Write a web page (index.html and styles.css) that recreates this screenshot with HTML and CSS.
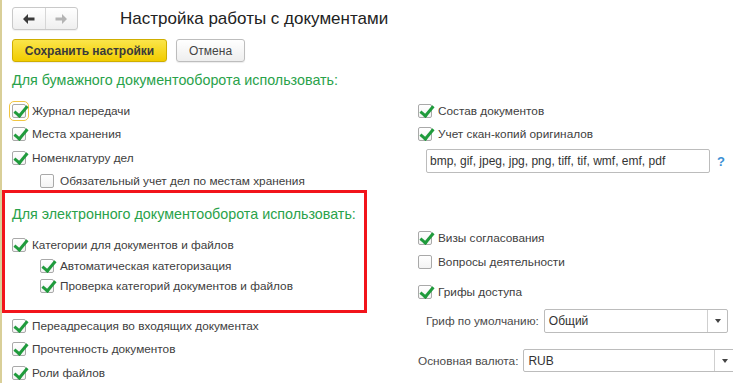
FILE: index.html
```html
<!DOCTYPE html>
<html lang="ru">
<head>
<meta charset="utf-8">
<title>Настройка работы с документами</title>
<link rel="stylesheet" href="styles.css">
</head>
<body>
<div class="page">
  <div class="header">
    <div class="nav">
      <button class="nav-btn" type="button" aria-label="Назад">
        <svg width="12" height="10" viewBox="0 0 12 10"><polygon points="0,5 5,0 5,3.5 11.5,3.5 11.5,6.5 5,6.5 5,10" fill="#3a3a3a"/></svg>
      </button>
      <button class="nav-btn" type="button" aria-label="Вперёд">
        <svg width="12" height="10" viewBox="0 0 12 10"><polygon points="12,5 7,0 7,3.5 0.5,3.5 0.5,6.5 7,6.5 7,10" fill="#b4b4b4"/></svg>
      </button>
    </div>
    <h1 class="title">Настройка работы с документами</h1>
  </div>

  <div class="actions">
    <button class="btn btn-primary" type="button">Сохранить настройки</button>
    <button class="btn" type="button">Отмена</button>
  </div>

  <h2 class="group-title group-title-paper">Для бумажного документооборота использовать:</h2>
  <div class="cols">
    <div class="col">
      <label class="check focused"><span class="box on"></span>Журнал передачи</label>
      <label class="check"><span class="box on"></span>Места хранения</label>
      <label class="check"><span class="box on"></span>Номенклатуру дел</label>
      <label class="check sub"><span class="box"></span>Обязательный учет дел по местам хранения</label>
    </div>
    <div class="col">
      <label class="check"><span class="box on"></span>Состав документов</label>
      <label class="check"><span class="box on"></span>Учет скан-копий оригиналов</label>
      <div class="input-row">
        <div class="input">bmp, gif, jpeg, jpg, png, tiff, tif, wmf, emf, pdf</div>
        <span class="help">?</span>
      </div>
    </div>
  </div>

  <div class="cols cols-edo">
    <div class="col">
      <div class="highlight">
        <h2 class="group-title">Для электронного документооборота использовать:</h2>
        <label class="check check-main"><span class="box on"></span>Категории для документов и файлов</label>
        <label class="check sub tight"><span class="box on"></span>Автоматическая категоризация</label>
        <label class="check sub tight"><span class="box on"></span>Проверка категорий документов и файлов</label>
      </div>
      <label class="check"><span class="box on"></span>Переадресация во входящих документах</label>
      <label class="check"><span class="box on"></span>Прочтенность документов</label>
      <label class="check"><span class="box on"></span>Роли файлов</label>
    </div>
    <div class="col col-edo-right">
      <label class="check"><span class="box on"></span>Визы согласования</label>
      <label class="check"><span class="box"></span>Вопросы деятельности</label>
      <label class="check check-grif"><span class="box on"></span>Грифы доступа</label>
      <div class="field field-grif">
        <span class="field-label">Гриф по умолчанию:</span>
        <div class="select select-grif"><span class="select-value">Общий</span><span class="select-btn"></span></div>
      </div>
      <div class="field field-currency">
        <span class="field-label">Основная валюта:</span>
        <div class="select select-currency"><span class="select-value">RUB</span><span class="select-btn"></span></div>
      </div>
    </div>
  </div>
</div>
</body>
</html>
```

FILE: styles.css
```css
* { box-sizing: border-box; }

html, body {
  margin: 0;
  padding: 0;
  background: #ffffff;
}

body {
  font-family: "Liberation Sans", Arial, sans-serif;
  font-size: 11.8px;
  color: #404040;
}

.page {
  width: 733px;
  height: 383px;
  overflow: hidden;
  border-left: 2px solid #d9cf98;
  padding: 7px 0 0 10px;
}

/* header */
.header {
  display: flex;
  align-items: center;
  height: 23px;
}

.nav {
  display: flex;
  width: 66px;
  height: 23px;
  border: 1px solid #c9c9c9;
  border-radius: 3px;
  background: linear-gradient(#ffffff, #efefef);
  box-shadow: 0 1px 1px rgba(0,0,0,0.06);
}

.nav-btn {
  flex: 1;
  border: 0;
  margin: 0;
  padding: 0;
  background: transparent;
  display: flex;
  align-items: center;
  justify-content: center;
}

.nav-btn + .nav-btn {
  border-left: 1px solid #d6d6d6;
}

.title {
  margin: 0 0 0 42px;
  font-size: 17px;
  font-weight: normal;
  color: #222222;
  line-height: 22px;
  white-space: nowrap;
}

/* actions */
.actions {
  display: flex;
  gap: 9px;
  margin-top: 9px;
}

.btn {
  height: 23px;
  padding: 0 12px;
  font-family: "Liberation Sans", Arial, sans-serif;
  font-size: 12px;
  color: #444444;
  border: 1px solid #bdbdbd;
  border-radius: 3px;
  background: linear-gradient(#ffffff, #eeeeee);
  box-shadow: 0 1px 1px rgba(0,0,0,0.08);
  white-space: nowrap;
}

.btn-primary {
  width: 155px;
  padding: 0;
  font-weight: bold;
  color: #3a3a3a;
  border-color: #cfae00;
  background: linear-gradient(#fbe54a, #f1cc00);
}

/* groups */
.group-title {
  margin: 0;
  font-size: 14.3px;
  font-weight: normal;
  line-height: 18px;
  color: #29a24a;
  white-space: nowrap;
}

.group-title-paper {
  margin-top: 9px;
}

.cols {
  display: grid;
  grid-template-columns: 406px 1fr;
}

.cols:not(.cols-edo) {
  margin-top: 10px;
}

.check {
  display: flex;
  align-items: center;
  height: 23.5px;
  white-space: nowrap;
}

.check.sub {
  padding-left: 28px;
}

.box {
  position: relative;
  width: 14px;
  height: 14px;
  margin-right: 6px;
  flex: none;
  border: 1px solid #a9a9a9;
  border-radius: 2px;
  background: linear-gradient(#ffffff, #f3f3f3);
}

.box.on::after {
  content: "";
  position: absolute;
  left: 4px;
  top: -2px;
  width: 5px;
  height: 11px;
  border-right: 3px solid #1f9b3c;
  border-bottom: 3px solid #1f9b3c;
  transform: rotate(40deg);
  transform-origin: center;
}

.focused .box {
  outline: 1px solid #f1c542;
  outline-offset: 2px;
}

/* input */
.input-row {
  display: flex;
  align-items: center;
  margin-top: 3px;
  padding-left: 8px;
}

.input {
  width: 284px;
  height: 24px;
  line-height: 22px;
  padding-left: 3px;
  border: 1px solid #bcbcbc;
  border-radius: 2px;
  color: #333333;
  font-size: 12px;
  white-space: nowrap;
}

.help {
  margin-left: 7px;
  color: #3b8fd4;
  font-weight: bold;
  font-size: 13px;
}

/* electronic section */
.cols-edo {
  margin-top: -3px;
}

.highlight {
  margin-left: -10px;
  width: 365px;
  border: 3px solid #f2141b;
  padding: 12px 0 14px 7px;
  margin-bottom: 1px;
}

.highlight .group-title {
  margin-bottom: 11px;
}

.check-main {
  height: 22px;
}

.check.tight {
  height: 20px;
}

.col-edo-right {
  padding-top: 36px;
}

.col-edo-right .check {
  height: 24px;
}

.check-grif {
  margin-top: 6px;
}

.field {
  display: flex;
  align-items: center;
  white-space: nowrap;
}

.field-grif {
  margin-top: 5px;
  padding-left: 8px;
}

.field-currency {
  margin-top: 16px;
}

.field-label {
  margin-right: 5px;
  color: #4a4a4a;
}

.select {
  display: flex;
  height: 24px;
  border: 1px solid #bcbcbc;
  border-radius: 2px;
  background: #ffffff;
  flex: none;
}

.select-grif { width: 184px; }
.select-currency { width: 212px; height: 23px; }

.select-value {
  flex: 1;
  padding-left: 4px;
  line-height: 22px;
  color: #333333;
  font-size: 12px;
}

.select-btn {
  width: 20px;
  border-left: 1px solid #cfcfcf;
  position: relative;
}

.select-btn::after {
  content: "";
  position: absolute;
  left: 7px;
  top: 9px;
  border-left: 3px solid transparent;
  border-right: 3px solid transparent;
  border-top: 4px solid #444444;
}
```
